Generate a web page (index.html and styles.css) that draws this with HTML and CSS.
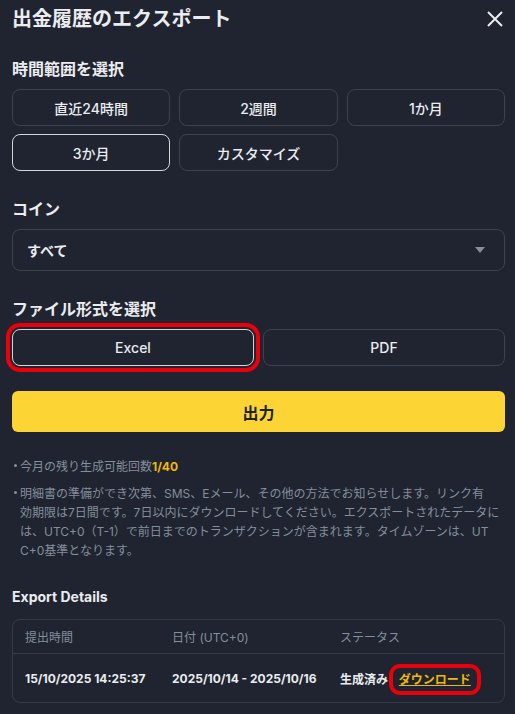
FILE: index.html
```html
<!DOCTYPE html>
<html lang="ja">
<head>
<meta charset="utf-8">
<link rel="stylesheet" href="styles.css">
</head>
<body>
<div class="panel">
  <header class="head">
    <h1 class="title">出金履歴のエクスポート</h1>
    <svg class="close" width="18" height="18" viewBox="0 0 18 18"><path d="M2 2L16 16M16 2L2 16" stroke="#eaecef" stroke-width="2" fill="none"/></svg>
  </header>

  <h2 class="label first">時間範囲を選択</h2>
  <div class="grid3">
    <div class="opt">直近24時間</div>
    <div class="opt">2週間</div>
    <div class="opt">1か月</div>
    <div class="opt sel">3か月</div>
    <div class="opt">カスタマイズ</div>
  </div>

  <h2 class="label">コイン</h2>
  <div class="select">
    <span>すべて</span>
    <svg width="10" height="6" viewBox="0 0 10 6"><path d="M0 0H10L5 6Z" fill="#848e9c"/></svg>
  </div>

  <h2 class="label">ファイル形式を選択</h2>
  <div class="grid2">
    <div class="opt sel mark">Excel</div>
    <div class="opt">PDF</div>
  </div>

  <button class="submit">出力</button>

  <ul class="notes">
    <li>今月の残り生成可能回数<b class="hl">1/40</b></li>
    <li>明細書の準備ができ次第、SMS、Eメール、その他の方法でお知らせします。リンク有<br>効期限は7日間です。7日以内にダウンロードしてください。エクスポートされたデータに<br>は、UTC+0（T-1）で前日までのトランザクションが含まれます。タイムゾーンは、UT<br>C+0基準となります。</li>
  </ul>

  <h3 class="sub">Export Details</h3>
  <div class="table">
    <div class="row th">
      <span>提出時間</span><span>日付 (UTC+0)</span><span>ステータス</span>
    </div>
    <div class="row td">
      <span>15/10/2025 14:25:37</span><span>2025/10/14 - 2025/10/16</span><span class="status">生成済み <a class="dl">ダウンロード</a></span>
    </div>
  </div>
</div>
</body>
</html>
```

FILE: styles.css
```css
* { box-sizing: border-box; }
html, body { margin: 0; padding: 0; }
body {
  background: #1f2430;
  color: #eaecef;
  font-family: "Inter", "Noto Sans CJK JP", sans-serif;
  width: 515px;
  height: 714px;
  overflow: hidden;
}
.panel { padding: 0 10px 0 12px; }
.head {
  height: 37px;
  display: flex;
  align-items: center;
  justify-content: space-between;
}
.title { margin: 0; font-size: 20px; font-weight: 700; line-height: 26px; }
.close { margin-right: 1px; }
.label {
  margin: 26px 0 8px;
  font-size: 16px;
  font-weight: 700;
  line-height: 24px;
}
.label.first { margin-top: 20px; }
.grid3 {
  display: grid;
  grid-template-columns: repeat(3, 1fr);
  gap: 8px 9px;
}
.grid2 {
  display: grid;
  grid-template-columns: 1fr 1fr;
  gap: 9px;
}
.opt {
  height: 37px;
  border: 1px solid #3c424e;
  border-radius: 8px;
  display: flex;
  align-items: center;
  justify-content: center;
  font-size: 14px;
  font-weight: 500;
}
.opt.sel { border-color: #d4d6da; }
.mark { outline: 4px solid #e8000b; outline-offset: 2px; }
.select {
  height: 42px;
  border: 1px solid #3c424e;
  border-radius: 8px;
  display: flex;
  align-items: center;
  justify-content: space-between;
  padding: 0 19px 0 14px;
  font-size: 14px;
  font-weight: 700;
}
.submit {
  display: block;
  width: 100%;
  height: 41px;
  margin-top: 25px;
  border: none;
  border-radius: 6px;
  background: #fcd535;
  color: #1e2329;
  font-family: inherit;
  font-size: 16px;
  font-weight: 700;
}
.notes {
  list-style: none;
  margin: 25px -10px 0 0;
  padding: 0 0 0 8px;
  font-size: 12px;
  line-height: 19px;
  color: #848e9c;
  white-space: nowrap;
}
.notes li { position: relative; margin-bottom: 8px; }
.notes li:last-child { margin-bottom: 0; }
.notes li::before {
  content: "";
  position: absolute;
  left: -6px;
  top: 7px;
  width: 3px;
  height: 3px;
  border-radius: 50%;
  background: #848e9c;
}
.hl { color: #f0b90b; font-weight: 700; }
.sub {
  margin: 27px 0 12px;
  font-size: 14px;
  font-weight: 700;
  line-height: 20px;
}
.table {
  border: 1px solid #353a46;
  border-radius: 8px;
}
.row {
  display: grid;
  grid-template-columns: 147px 168px 1fr;
  padding: 0 12px;
  align-items: center;
}
.th {
  height: 34px;
  border-bottom: 1px solid #353a46;
  font-size: 12px;
  color: #848e9c;
}
.td {
  height: 48px;
  font-size: 12px;
  font-weight: 700;
}
.status { white-space: nowrap; }
.dl {
  color: #f0b90b;
  text-decoration: underline;
  padding: 5px 7px;
  border-radius: 8px;
  outline: 4px solid #e8000b;
  outline-offset: -1px;
  margin-left: 1px;
}
```
